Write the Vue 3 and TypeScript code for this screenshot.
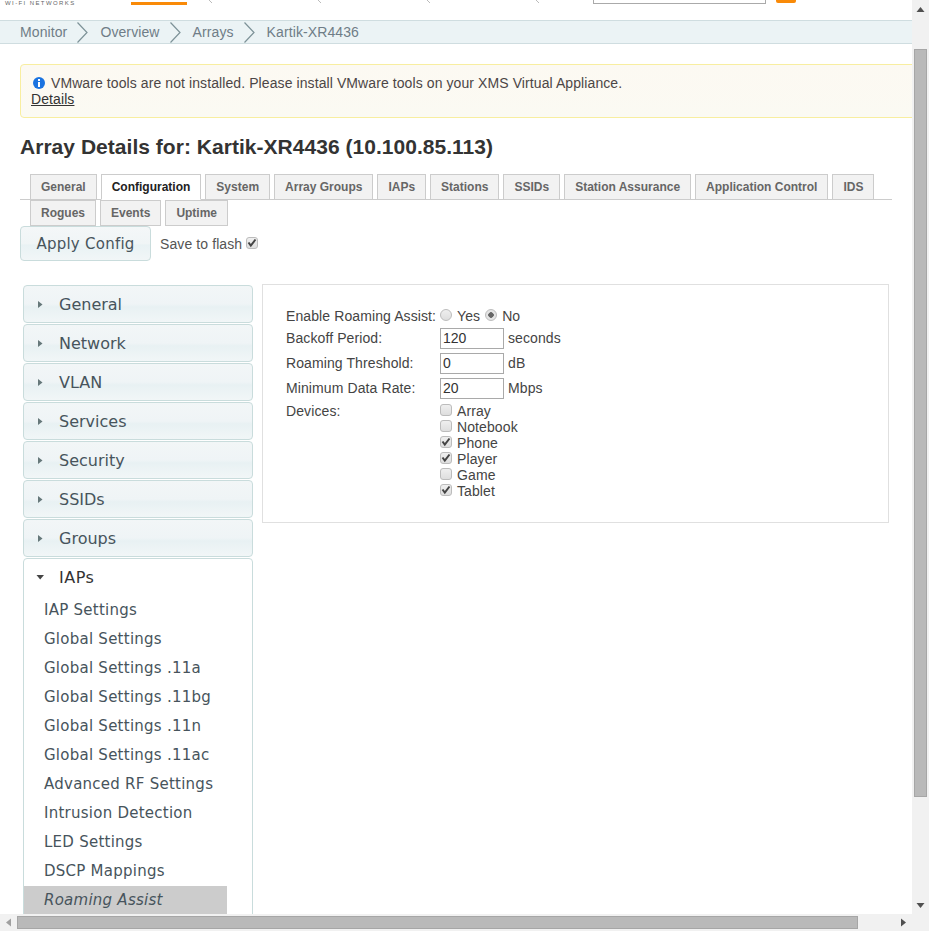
<script setup lang="ts">
import { ref } from 'vue'

interface Device {
  name: string
  on: boolean
}

const crumbs = ['Monitor', 'Overview', 'Arrays', 'Kartik-XR4436']
const tabs_main = ['General', 'Configuration', 'System', 'Array Groups', 'IAPs', 'Stations', 'SSIDs', 'Station Assurance', 'Application Control', 'IDS']
const tabs_more = ['Rogues', 'Events', 'Uptime']
const sections = ['General', 'Network', 'VLAN', 'Services', 'Security', 'SSIDs', 'Groups']
const iap_items = [
  'IAP Settings',
  'Global Settings',
  'Global Settings .11a',
  'Global Settings .11bg',
  'Global Settings .11n',
  'Global Settings .11ac',
  'Advanced RF Settings',
  'Intrusion Detection',
  'LED Settings',
  'DSCP Mappings',
  'Roaming Assist'
]
const devices = ref<Device[]>([
  { name: 'Array', on: false },
  { name: 'Notebook', on: false },
  { name: 'Phone', on: true },
  { name: 'Player', on: true },
  { name: 'Game', on: false },
  { name: 'Tablet', on: true }
])
const active_tab = ref('Configuration')
const active_item = ref('Roaming Assist')
const check_path = 'M2.5 5.5 L4.8 8.5 L9.5 2.5'
</script>

<template>
  <div class="window">
    <div class="viewport">
      <div class="top-strip">
        <span class="brand">WI-FI NETWORKS</span>
        <span class="top-tab"></span>
        <span class="tick t1"></span>
        <span class="tick t2"></span>
        <span class="tick t3"></span>
        <span class="tick t4"></span>
        <span class="search"></span>
        <span class="search-btn"></span>
      </div>

      <nav class="crumbs">
        <template v-for="(c, i) in crumbs" :key="c">
          <span>{{ c }}</span>
          <svg v-if="i < crumbs.length - 1" class="crumb-sep" width="11" height="21" viewBox="0 0 11 21">
            <path d="M0.5 0.5 L10 10.5 L0.5 20.5" fill="none" stroke="#7d9298" stroke-width="1.2" />
          </svg>
        </template>
      </nav>

      <div class="alert">
        <div class="alert-line">
          <svg class="info" width="12" height="12" viewBox="0 0 12 12">
            <circle cx="6" cy="6" r="6" fill="#1a73e0" />
            <rect x="5" y="2" width="2" height="2" fill="#fff" />
            <rect x="5" y="5" width="2" height="5" fill="#fff" />
          </svg>
          VMware tools are not installed. Please install VMware tools on your XMS Virtual Appliance.
        </div>
        <a class="details">Details</a>
      </div>

      <h1 class="title">Array Details for: Kartik-XR4436 (10.100.85.113)</h1>

      <div class="tabs tabs-main">
        <a v-for="t in tabs_main" :key="t" class="tab" :class="{ active: t === active_tab }">{{ t }}</a>
      </div>
      <div class="tabs tabs-more">
        <a v-for="t in tabs_more" :key="t" class="tab">{{ t }}</a>
      </div>

      <div class="actions">
        <button class="apply">Apply Config</button>
        <label class="flash">Save to flash
          <span class="check">
            <svg width="12" height="12" viewBox="0 0 12 12"><path :d="check_path" fill="none" stroke="#444" stroke-width="2" /></svg>
          </span>
        </label>
      </div>

      <div class="body">
        <aside class="side">
          <div v-for="s in sections" :key="s" class="sec-head">
            <svg class="arrow" width="5" height="7" viewBox="0 0 5 7"><path d="M0 0 L4.5 3.5 L0 7 Z" fill="#66787a" /></svg>
            <span>{{ s }}</span>
          </div>
          <div class="sec-open">
            <div class="open-head">
              <svg class="arrow-down" width="9" height="5" viewBox="0 0 9 5"><path d="M0.5 0 L8 0 L4.2 4.5 Z" fill="#444" /></svg>
              <span>IAPs</span>
            </div>
            <a v-for="item in iap_items" :key="item" class="sub" :class="{ current: item === active_item }">{{ item }}</a>
          </div>
        </aside>

        <section class="panel">
          <div class="form">
            <span>Enable Roaming Assist:</span>
            <div class="radios">
              <span class="radio"></span><span class="r-label">Yes</span>
              <span class="radio on"></span><span class="r-label">No</span>
            </div>
            <span class="mid">Backoff Period:</span>
            <div class="field"><input value="120" /><span>seconds</span></div>
            <span class="mid">Roaming Threshold:</span>
            <div class="field"><input value="0" /><span>dB</span></div>
            <span class="mid">Minimum Data Rate:</span>
            <div class="field"><input value="20" /><span>Mbps</span></div>
            <span class="devices-label">Devices:</span>
            <div class="devices">
              <div v-for="d in devices" :key="d.name" class="device">
                <span class="check">
                  <svg v-if="d.on" width="12" height="12" viewBox="0 0 12 12"><path :d="check_path" fill="none" stroke="#444" stroke-width="2" /></svg>
                </span>
                <span>{{ d.name }}</span>
              </div>
            </div>
          </div>
        </section>
      </div>
    </div>

    <div class="vbar">
      <svg class="sb-up" width="9" height="5" viewBox="0 0 9 5"><path d="M4.5 0 L8.5 5 L0.5 5 Z" fill="#505050" /></svg>
      <div class="v-thumb"></div>
      <svg class="sb-down" width="9" height="5" viewBox="0 0 9 5"><path d="M0.5 0 L8.5 0 L4.5 5 Z" fill="#505050" /></svg>
    </div>
    <div class="hbar">
      <svg class="sb-left" width="5" height="9" viewBox="0 0 5 9"><path d="M5 0.5 L5 8.5 L0 4.5 Z" fill="#a0a0a0" /></svg>
      <div class="h-thumb"></div>
      <svg class="sb-right" width="5" height="9" viewBox="0 0 5 9"><path d="M0 0.5 L0 8.5 L5 4.5 Z" fill="#505050" /></svg>
    </div>
    <div class="corner"></div>
  </div>
</template>

<style scoped>
.window {
  width: 929px;
  height: 931px;
  display: grid;
  grid-template-columns: 912px 17px;
  grid-template-rows: 914px 17px;
  overflow: hidden;
  font-family: "Liberation Sans", Arial, sans-serif;
  font-size: 14px;
  letter-spacing: 0.1px;
  color: #444;
  background: #fff;
}

.viewport {
  overflow: hidden;
  min-width: 0;
}

/* header scrolled almost out of view */
.top-strip {
  height: 20px;
  position: relative;
}

.brand {
  position: absolute;
  left: 5px;
  top: 0;
  font-size: 6px;
  line-height: 6px;
  letter-spacing: 1.4px;
  color: #666;
  white-space: nowrap;
}

.top-tab {
  position: absolute;
  left: 131px;
  top: 2px;
  width: 56px;
  height: 3px;
  background: #f98a08;
}

.tick {
  position: absolute;
  top: 0;
  width: 3px;
  height: 3px;
  background: linear-gradient(135deg, transparent 40%, #bbb 40%, #bbb 60%, transparent 60%);
  transform: scaleX(-1);
}

.t1 { left: 209px; }
.t2 { left: 318px; }
.t3 { left: 427px; }
.t4 { left: 536px; }

.search {
  position: absolute;
  left: 593px;
  top: -10px;
  width: 171px;
  height: 12px;
  border: 1px solid #aaa;
}

.search-btn {
  position: absolute;
  left: 776px;
  top: -3px;
  width: 20px;
  height: 6px;
  border-radius: 2px;
  background: #f98a08;
}

.crumbs {
  height: 22px;
  border-top: 1px solid #cfdde0;
  border-bottom: 1px solid #cfdde0;
  background: #ebf3f5;
  display: flex;
  align-items: center;
  padding-left: 20px;
  color: #6f7d87;
}

.crumb-sep {
  margin: 0 12px 0 10px;
}

.alert {
  margin: 20px -40px 0 20px;
  height: 54px;
  box-sizing: border-box;
  padding: 10px 10px;
  border: 1px solid #f8eea0;
  border-radius: 4px;
  background: linear-gradient(#fcf9f2, #fbfaf3);
  line-height: 16px;
  color: #4c4646;
  letter-spacing: 0.09px;
}

.info {
  margin: 0 2px 0 2px;
  vertical-align: -1px;
}

.details {
  display: block;
  text-decoration: underline;
  color: #333;
}

.title {
  margin: 18px 0 16px 20px;
  font-size: 21px;
  line-height: 22px;
  font-weight: bold;
  letter-spacing: 0.03px;
  color: #333;
}

.tabs {
  display: flex;
  gap: 4px;
  width: 862px;
  margin-left: 20px;
  padding-left: 10px;
  letter-spacing: 0;
}

.tabs-main {
  border-bottom: 1px solid #ccc;
}

.tab {
  box-sizing: border-box;
  height: 26px;
  padding: 0 10px;
  border: 1px solid #ccc;
  background: #f2f2f2;
  color: #666;
  font-size: 12px;
  font-weight: bold;
  line-height: 24px;
  white-space: nowrap;
}

.tabs-main .tab {
  margin-bottom: -1px;
}

.tab.active {
  background: #fff;
  color: #222;
  border-bottom-color: #fff;
}

.actions {
  display: flex;
  align-items: center;
  margin-left: 20px;
  gap: 9px;
}

.apply {
  width: 131px;
  height: 35px;
  padding: 0;
  border: 1px solid #c9dcdc;
  border-radius: 4px;
  background: linear-gradient(#f4f7f8 0%, #f0f5f6 50%, #e9f2f4 55%, #f1f6f7 100%);
  color: #47545c;
  font-family: "DejaVu Sans", Verdana, sans-serif;
  font-size: 15px;
  letter-spacing: 0.25px;
}

.flash {
  display: flex;
  align-items: center;
  gap: 4px;
  color: #555;
}

.check {
  box-sizing: border-box;
  flex: none;
  width: 12px;
  height: 12px;
  border: 1px solid #bcbcbc;
  border-radius: 3px;
  background: linear-gradient(#efefef, #dedede);
  display: block;
}

.flash .check {
  margin-top: -2px;
}

.check svg {
  display: block;
  margin: -1px;
}

.body {
  display: flex;
  align-items: flex-start;
  margin: 23px 0 0 23px;
}

.side {
  width: 230px;
  margin-top: 1px;
  flex: none;
  font-family: "DejaVu Sans", Verdana, sans-serif;
  letter-spacing: 0;
}

.sec-head {
  box-sizing: border-box;
  height: 38px;
  margin-bottom: 1px;
  border: 1px solid #c9dcdc;
  border-radius: 4px;
  background: linear-gradient(#f2f6f7 0%, #eff4f6 50%, #e8f1f3 58%, #f1f6f7 100%);
  display: flex;
  align-items: center;
  padding-left: 14px;
  font-size: 16px;
  color: #47545c;
}

.arrow {
  margin-right: 16px;
}

.sec-open {
  border: 1px solid #c9dcdc;
  border-radius: 4px 4px 0 0;
  height: 420px;
}

.open-head {
  height: 37px;
  display: flex;
  align-items: center;
  padding-left: 12px;
  font-size: 16px;
  letter-spacing: 0.5px;
  color: #333;
}

.arrow-down {
  margin-right: 14px;
}

.sub {
  display: block;
  width: 203px;
  height: 29px;
  box-sizing: border-box;
  padding-left: 20px;
  font-size: 15px;
  line-height: 29px;
  letter-spacing: 0.25px;
  color: #47545c;
  white-space: nowrap;
}

.sub.current {
  background: #ccc;
  font-style: italic;
}

.panel {
  box-sizing: border-box;
  width: 627px;
  height: 239px;
  margin-left: 9px;
  flex: none;
  padding: 23px;
  border: 1px solid #e0e0e0;
  color: #444;
}

.form {
  display: grid;
  grid-template-columns: 154px 1fr;
  row-gap: 4px;
  line-height: 16px;
  align-items: center;
}

.mid,
.field span {
  padding-bottom: 2px;
}

.devices-label {
  align-self: start;
}

.radios {
  display: flex;
  align-items: center;
}

.radio {
  box-sizing: border-box;
  width: 12px;
  height: 12px;
  border: 1px solid #bcbcbc;
  border-radius: 50%;
  background: linear-gradient(#efefef, #dedede);
  margin-top: -3px;
}

.radio.on {
  background: radial-gradient(circle, #666 0 2.5px, #e4e4e4 3px);
}

.r-label {
  margin: 0 5px 0 5px;
}

.field {
  display: flex;
  align-items: center;
  gap: 4px;
}

.field input {
  box-sizing: border-box;
  width: 64px;
  height: 21px;
  padding: 0 2px 2px;
  border: 1px solid #a9a9a9;
  font: 14px "Liberation Sans", Arial, sans-serif;
  color: #333;
  outline: none;
}

.device {
  display: flex;
  align-items: center;
  gap: 5px;
  height: 16px;
}

.device .check {
  margin-top: -3px;
}

.vbar,
.hbar,
.corner {
  background: #f1f1f1;
  position: relative;
}

.v-thumb {
  position: absolute;
  left: 2px;
  top: 49px;
  width: 13px;
  height: 748px;
  box-sizing: border-box;
  border: 1px solid #a6a6a6;
  background: #b9b9b9;
}

.h-thumb {
  position: absolute;
  left: 17px;
  top: 2px;
  width: 841px;
  height: 13px;
  box-sizing: border-box;
  border: 1px solid #a6a6a6;
  background: #b9b9b9;
}

.sb-up { position: absolute; left: 4px; top: 7px; }
.sb-down { position: absolute; left: 4px; top: 903px; }
.sb-left { position: absolute; left: 6px; top: 4px; }
.sb-right { position: absolute; left: 901px; top: 4px; }
</style>
